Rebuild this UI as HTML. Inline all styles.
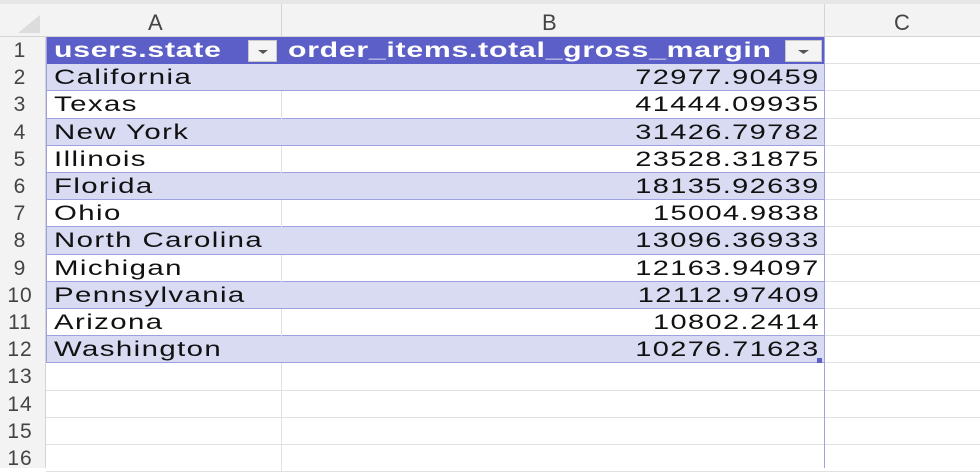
<!DOCTYPE html><html><head><style>
body{margin:0;width:980px;height:468px;overflow:hidden;background:#fff;font-family:"Liberation Sans",sans-serif;position:relative}
.a{position:absolute}
.t{font-size:21px;letter-spacing:1px;color:#111;white-space:nowrap;line-height:27px}
.l{transform:scaleX(1.4);transform-origin:left center}
.r{transform:scaleX(1.38);transform-origin:right center}
.h{transform:scaleX(1.44);transform-origin:left center}
</style></head><body>
<div class="a" style="left:0;top:0;width:980px;height:37px;background:#f3f3f3;border-bottom:1px solid #d4d4d4;box-sizing:border-box"></div>
<div class="a" style="left:0;top:0;width:980px;height:4px;background:#e6e6e6"></div>
<div class="a" style="left:0;top:37px;width:46px;height:431px;background:#f3f3f3;border-right:1px solid #d4d4d4;box-sizing:border-box"></div>
<svg class="a" style="left:6px;top:13px" width="36" height="22"><polygon points="34,2 34,20 12,20" fill="#dcdcdc"/></svg>
<div class="a" style="left:281px;top:4px;width:1px;height:33px;background:#d4d4d4"></div>
<div class="a" style="left:824px;top:4px;width:1px;height:33px;background:#d4d4d4"></div>
<div class="a t" style="left:148px;top:9px;color:#444;letter-spacing:0;font-size:22px">A</div>
<div class="a t" style="left:542px;top:9px;color:#444;letter-spacing:0;font-size:22px">B</div>
<div class="a t" style="left:894px;top:9px;color:#444;letter-spacing:0;font-size:22px">C</div>
<div id="g"></div>
<script>
var rows=[["California","72977.90459"],["Texas","41444.09935"],["New York","31426.79782"],["Illinois","23528.31875"],["Florida","18135.92639"],["Ohio","15004.9838"],["North Carolina","13096.36933"],["Michigan","12163.94097"],["Pennsylvania","12112.97409"],["Arizona","10802.2414"],["Washington","10276.71623"]];
var h="",rh=27.2,top0=37;
for(var i=0;i<16;i++){var y=top0+i*rh;
h+='<div class="a t" style="left:0;width:40px;text-align:center;top:'+(y)+'px;color:#444;letter-spacing:1px;font-size:21px">'+(i+1)+'</div>';
if(i==0){h+='<div class="a" style="left:46px;top:'+y+'px;width:778px;height:'+rh+'px;background:#5b5fc7"></div>';
h+='<div class="a t h" style="left:54px;top:'+y+'px;color:#fff;font-weight:bold;letter-spacing:0.5px">users.state</div>';
h+='<div class="a t h" style="left:288px;top:'+y+'px;color:#fff;font-weight:bold;letter-spacing:0.5px">order_items.total_gross_margin</div>';
[248,785].forEach(function(x){h+='<div class="a" style="left:'+x+'px;top:'+(y+3)+'px;width:'+(x==248?29:37)+'px;height:22px;background:#f4f4f4;border:1px solid #c8c8c8;box-sizing:border-box"><svg width="100%" height="20"><polygon points="'+(x==248?'9,9 19,9 14,13':'12,9 23,9 17.5,13')+'" fill="#555"/></svg></div>'});
}else if(i<12){var r=rows[i-1];var bg=(i%2==1)?'#d9dbf3':'#fff';
h+='<div class="a" style="left:46px;top:'+y+'px;width:778px;height:'+rh+'px;background:'+bg+';border-bottom:1px solid #9da1e0;box-sizing:border-box"></div>';
if(bg=='#fff')h+='<div class="a" style="left:281px;top:'+y+'px;width:1px;height:'+rh+'px;background:#e0e0e0"></div>';
h+='<div class="a t l" style="left:54px;top:'+y+'px">'+r[0]+'</div>';
h+='<div class="a t r" style="right:160px;top:'+y+'px">'+r[1]+'</div>';
}else{h+='<div class="a" style="left:46px;top:'+(y+rh-1)+'px;width:934px;height:1px;background:#e0e0e0"></div>';
h+='<div class="a" style="left:281px;top:'+y+'px;width:1px;height:'+rh+'px;background:#e0e0e0"></div>';}
if(i<12)h+='<div class="a" style="left:824px;top:'+(y+rh-1)+'px;width:156px;height:1px;background:#e0e0e0"></div>';
}
h+='<div class="a" style="left:824px;top:37px;width:1px;height:431px;background:#9da1e0"></div>';
h+='<div class="a" style="left:46px;top:37px;width:1px;height:326px;background:#9da1e0"></div>';
h+='<div class="a" style="left:817px;top:358px;width:5px;height:5px;background:#5b5fc7"></div>';
document.getElementById('g').innerHTML=h;
</script>
</body></html>
